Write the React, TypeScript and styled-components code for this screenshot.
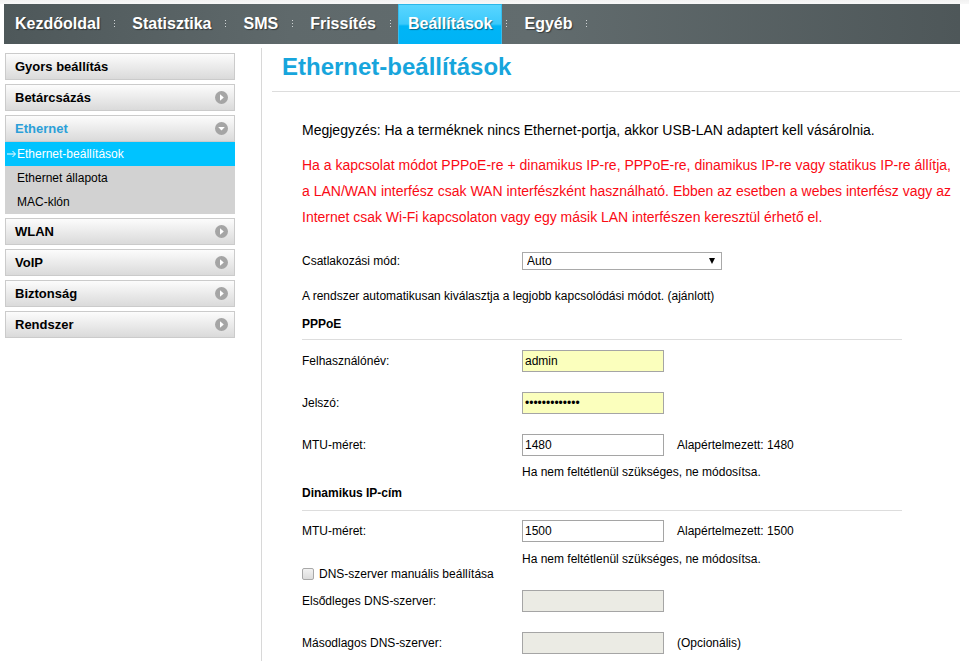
import React from "react";
import styled, { createGlobalStyle } from "styled-components";

const Global = createGlobalStyle`
  html, body { margin: 0; padding: 0; height: 100%; overflow: hidden; background: #fff; }
  body { font-family: "Liberation Sans", Arial, sans-serif; color: #000; }
  #root { height: 100%; }
`;

const Page = styled.div`
  display: flex;
  flex-direction: column;
  width: 969px;
  height: 661px;
  overflow: hidden;
  background: linear-gradient(#f2f2f2, #f8f8f8 4px, #ffffff 4px);
`;

const TopBar = styled.nav`
  display: flex;
  align-items: stretch;
  flex: none;
  height: 40px;
  margin: 4px 9px 0 4px;
  padding-left: 1px;
  background: linear-gradient(90deg, #4e585a 0%, #5f696b 30%, #626c6e 55%, #4e5759 100%);
`;

const NavItem = styled.div<{ $active?: boolean }>`
  display: flex;
  align-items: center;
  box-sizing: border-box;
  padding: 0 10px;
  font-size: 16px;
  font-weight: 700;
  color: #fff;
  text-shadow: 1px 1px 1px rgba(0, 0, 0, 0.45);
  background: ${(p) =>
    p.$active
      ? "linear-gradient(#5ad6ff 0, #3cc9fb 50%, #00b5f6 55%, #00b3f5 100%)"
      : "transparent"};
  box-shadow: ${(p) => (p.$active ? "inset 0 1px 0 #2bb6e8, inset 1px 0 0 #35bdee, inset -1px 0 0 #35bdee" : "none")};
`;

const NavSep = styled.span`
  align-self: center;
  width: 1px;
  height: 9px;
  margin: 1px 7px 0 4px;
  background: repeating-linear-gradient(#cfd3d4 0 1px, transparent 1px 3px);
`;

const Body = styled.div`
  display: flex;
  flex: 1;
  min-height: 0;
  padding-top: 4px;
`;

const Sidebar = styled.aside`
  flex: none;
  width: 230px;
  padding: 5px 26px 0 5px;
`;

const MenuGroup = styled.div`
  margin-bottom: 4px;
`;

const MenuButton = styled.div<{ $open?: boolean }>`
  display: flex;
  align-items: center;
  justify-content: space-between;
  box-sizing: border-box;
  height: 27px;
  padding: 0 6px 0 9px;
  border: 1px solid #cbcbcb;
  background: linear-gradient(#fcfcfc, #dadada);
  font-size: 13px;
  font-weight: 700;
  color: ${(p) => (p.$open ? "#2b9fd8" : "#000")};
`;

const SubMenu = styled.div`
  background: #d2d2d2;
`;

const SubItem = styled.div<{ $active?: boolean }>`
  position: relative;
  height: 24px;
  padding-left: 12px;
  line-height: 24px;
  font-size: 12px;
  color: ${(p) => (p.$active ? "#fff" : "#000")};
  background: ${(p) => (p.$active ? "#00c3ff" : "transparent")};
`;

const SubArrow = styled.svg`
  position: absolute;
  left: 2px;
  top: 8px;
`;

const Main = styled.main`
  flex: 1;
  min-width: 0;
  border-left: 1px solid #d8d8d8;
  padding-left: 10px;
  margin-right: 9px;
`;

const TitleBar = styled.header`
  box-sizing: border-box;
  height: 44px;
  padding-left: 10px;
  border-bottom: 1px solid #dddddd;
`;

const Title = styled.h1`
  margin: 0;
  font-size: 24px;
  line-height: 37px;
  font-weight: 700;
  color: #17a5dc;
`;

const Content = styled.div`
  padding-left: 30px;
`;

const Notice = styled.p`
  margin: 25px 0 0;
  font-size: 14px;
  line-height: 26px;
`;

const Warning = styled.p`
  width: 649px;
  margin: 9px 0 0;
  font-size: 14px;
  line-height: 26px;
  letter-spacing: -0.012px;
  color: #fa0a14;
  text-align: justify;
`;

const Form = styled.div`
  width: 600px;
`;

const Row = styled.div<{ $top: number; $height?: number }>`
  display: flex;
  align-items: center;
  height: ${(p) => p.$height ?? 22}px;
  margin-top: ${(p) => p.$top}px;
  font-size: 12px;
`;

const Label = styled.label`
  flex: none;
  width: 220px;
`;

const SelectWrap = styled.div`
  position: relative;
  width: 200px;
  height: 18px;

  &::after {
    content: "";
    position: absolute;
    right: 7px;
    top: 6px;
    border-left: 3px solid transparent;
    border-right: 3px solid transparent;
    border-top: 6px solid #000;
    pointer-events: none;
  }
`;

const Select = styled.select`
  appearance: none;
  display: block;
  box-sizing: border-box;
  width: 100%;
  height: 100%;
  padding: 0 0 0 4px;
  border: 1px solid #a9a9a9;
  border-radius: 0;
  background: #fff;
  font: 12px "Liberation Sans", Arial, sans-serif;
  color: #000;
`;

const TextInput = styled.input<{ $fill?: string }>`
  flex: none;
  box-sizing: border-box;
  width: 142px;
  height: 22px;
  padding: 0 2px;
  border: 1px solid #a5a5a5;
  border-radius: 0;
  outline: none;
  background: ${(p) => p.$fill ?? "#fff"};
  font: 12px "Liberation Sans", Arial, sans-serif;
  color: #000;
`;

const Suffix = styled.span`
  margin-left: 13px;
`;

const HelpText = styled.div<{ $top: number }>`
  margin-top: ${(p) => p.$top}px;
  font-size: 12px;
  line-height: 18px;
`;

const Hint = styled.div<{ $top: number }>`
  margin-top: ${(p) => p.$top}px;
  padding-left: 220px;
  font-size: 12px;
  line-height: 16px;
`;

const SectionTitle = styled.div<{ $top: number; $height: number }>`
  box-sizing: content-box;
  height: ${(p) => p.$height}px;
  margin-top: ${(p) => p.$top}px;
  border-bottom: 1px solid #dddddd;
  font-size: 12px;
  font-weight: 700;
  line-height: 18px;
`;

const CheckRow = styled.label`
  display: flex;
  align-items: center;
  height: 14px;
  font-size: 12px;
`;

const Check = styled.input`
  appearance: none;
  box-sizing: border-box;
  width: 12px;
  height: 12px;
  margin: 0 5px 0 0;
  border: 1px solid #a8a8a8;
  border-radius: 2px;
  background: linear-gradient(#f2f2f2, #dcdcdc);
`;

const ChevronIcon = ({ down }: { down?: boolean }) => (
  <svg width="13" height="13" viewBox="0 0 13 13" aria-hidden="true">
    <circle cx="6.5" cy="6.5" r="6.5" fill="#a5a5a5" />
    <path d={down ? "M3.2 5h6.6L6.5 8.6z" : "M5 3.2l3.8 3.3L5 9.8z"} fill="#fff" />
  </svg>
);

const menuBefore = [{ name: "Gyors beállítás", plain: true }, { name: "Betárcsázás" }];
const menuAfter = ["WLAN", "VoIP", "Biztonság", "Rendszer"];
const navItems = ["Kezdőoldal", "Statisztika", "SMS", "Frissítés", "Beállítások", "Egyéb"];
const noop = () => undefined;

export default function App() {
  return (
    <Page>
      <Global />
      <TopBar>
        {navItems.map((n) => (
          <React.Fragment key={n}>
            <NavItem $active={n === "Beállítások"}>{n}</NavItem>
            <NavSep />
          </React.Fragment>
        ))}
      </TopBar>
      <Body>
        <Sidebar>
          {menuBefore.map((m) => (
            <MenuGroup key={m.name}>
              <MenuButton>
                {m.name}
                {!m.plain && <ChevronIcon />}
              </MenuButton>
            </MenuGroup>
          ))}
          <MenuGroup>
            <MenuButton $open>
              Ethernet
              <ChevronIcon down />
            </MenuButton>
            <SubMenu>
              <SubItem $active>
                <SubArrow width="10" height="8" viewBox="0 0 10 8" fill="none" stroke="#fff" strokeWidth="1">
                  <path d="M0 4h8M5.5 1L8.5 4L5.5 7" />
                </SubArrow>
                Ethernet-beállítások
              </SubItem>
              <SubItem>Ethernet állapota</SubItem>
              <SubItem>MAC-klón</SubItem>
            </SubMenu>
          </MenuGroup>
          {menuAfter.map((m) => (
            <MenuGroup key={m}>
              <MenuButton>
                {m}
                <ChevronIcon />
              </MenuButton>
            </MenuGroup>
          ))}
        </Sidebar>
        <Main>
          <TitleBar>
            <Title>Ethernet-beállítások</Title>
          </TitleBar>
          <Content>
            <Notice>Megjegyzés: Ha a terméknek nincs Ethernet-portja, akkor USB-LAN adaptert kell vásárolnia.</Notice>
            <Warning>
              Ha a kapcsolat módot PPPoE-re + dinamikus IP-re, PPPoE-re, dinamikus IP-re vagy statikus IP-re állítja, a
              LAN/WAN interfész csak WAN interfészként használható. Ebben az esetben a webes interfész vagy az Internet
              csak Wi-Fi kapcsolaton vagy egy másik LAN interfészen keresztül érhető el.
            </Warning>
            <Form>
              <Row $top={22} $height={18}>
                <Label>Csatlakozási mód:</Label>
                <SelectWrap>
                  <Select defaultValue="Auto">
                    <option>Auto</option>
                  </Select>
                </SelectWrap>
              </Row>
              <HelpText $top={17}>A rendszer automatikusan kiválasztja a legjobb kapcsolódási módot. (ajánlott)</HelpText>
              <SectionTitle $top={10} $height={24}>PPPoE</SectionTitle>
              <Row $top={10}>
                <Label>Felhasználónév:</Label>
                <TextInput $fill="#fbffbd" value="admin" onChange={noop} />
              </Row>
              <Row $top={20}>
                <Label>Jelszó:</Label>
                <TextInput $fill="#fbffbd" type="password" value="aaaaaaaaaaaaa" onChange={noop} />
              </Row>
              <Row $top={20}>
                <Label>MTU-méret:</Label>
                <TextInput value="1480" onChange={noop} />
                <Suffix>Alapértelmezett: 1480</Suffix>
              </Row>
              <Hint $top={8}>Ha nem feltétlenül szükséges, ne módosítsa.</Hint>
              <SectionTitle $top={4} $height={26}>Dinamikus IP-cím</SectionTitle>
              <Row $top={9}>
                <Label>MTU-méret:</Label>
                <TextInput value="1500" onChange={noop} />
                <Suffix>Alapértelmezett: 1500</Suffix>
              </Row>
              <Hint $top={9}>Ha nem feltétlenül szükséges, ne módosítsa.</Hint>
              <CheckRow>
                <Check type="checkbox" />
                DNS-szerver manuális beállítása
              </CheckRow>
              <Row $top={9}>
                <Label>Elsődleges DNS-szerver:</Label>
                <TextInput $fill="#ebebe4" disabled />
              </Row>
              <Row $top={20}>
                <Label>Másodlagos DNS-szerver:</Label>
                <TextInput $fill="#ebebe4" disabled />
                <Suffix>(Opcionális)</Suffix>
              </Row>
            </Form>
          </Content>
        </Main>
      </Body>
    </Page>
  );
}
